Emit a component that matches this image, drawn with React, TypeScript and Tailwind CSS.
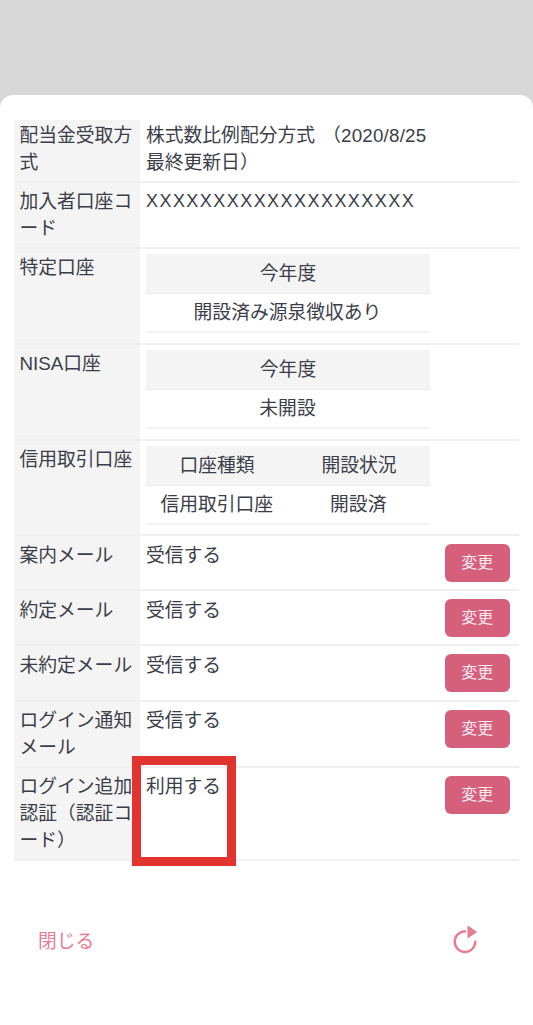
import type { ReactNode } from "react";

type MiniTableProps = { head: string[]; cells: string[] };

function MiniTable({ head, cells }: MiniTableProps) {
  return (
    <div className="mt-[5px] w-[284px] text-center">
      <div className="flex h-10 items-center border-b border-[#ececee] bg-[#f4f4f4]">
        {head.map((text) => (
          <div key={text} className="flex-1">{text}</div>
        ))}
      </div>
      <div className="flex h-[39px] items-center border-b-2 border-[#f3f3f4] pr-px">
        {cells.map((text) => (
          <div key={text} className="flex-1">{text}</div>
        ))}
      </div>
    </div>
  );
}

type RowProps = { label: string; height: string; pad?: string; editable?: boolean; children: ReactNode };

function Row({ label, height, pad = "pt-[5px]", editable, children }: RowProps) {
  return (
    <div className={`flex border-b-2 border-[#f0f0f1] ${height}`}>
      <div className={`w-[126px] shrink-0 whitespace-pre bg-[#f4f4f4] pl-[5.5px] ${pad}`}>{label}</div>
      <div className="w-[304.5px] shrink-0 whitespace-pre pl-[6px]">{children}</div>
      {editable && (
        <button className="mt-2 h-[38px] w-[65.5px] rounded-md bg-[#d65f7b] pb-px text-[16px] text-[#fdeaf0]">変更</button>
      )}
    </div>
  );
}

function Value({ children }: { children: ReactNode }) {
  return <div className="pt-[6px]">{children}</div>;
}

function ReloadIcon() {
  return (
    <svg width="26" height="30" viewBox="0 0 26 30" fill="none">
      <path d="M12 6.4A10.3 10.3 0 1 0 22.3 16.7" stroke="#e77b94" strokeWidth="2.4" strokeLinecap="round" />
      <path d="M15 1.2L23.4 7L15 12.8Z" fill="#e77b94" stroke="#e77b94" strokeLinejoin="round" />
    </svg>
  );
}

export default function App() {
  return (
    <div className="h-[1025px] w-[533px] bg-[#d7d7d7] pt-[95px] font-['Liberation_Sans','Noto_Sans_CJK_JP',sans-serif] text-[18.8px] leading-[27px] text-[#3b3e49]">
      <div className="h-[930px] rounded-t-[13px] bg-white pt-[25px]">
        <div className="ml-[14px] w-[505px]">
          <Row label={"配当金受取方\n式"} height="h-[63px]" pad="pt-[2px]">
            <div className="pt-[2px] [word-spacing:2px]">
              {"株式数比例配分方式 （"}
              <span className="tracking-[0.2px]">2020/8/25</span>
              {"\n最終更新日）"}
            </div>
          </Row>
          <Row label={"加入者口座コ\nード"} height="h-[66px]">
            <div className="pt-[5px] text-[18px] tracking-[1.45px]">XXXXXXXXXXXXXXXXXXXX</div>
          </Row>
          <Row label="特定口座" height="h-[96px]">
            <MiniTable head={["今年度"]} cells={["開設済み源泉徴収あり"]} />
          </Row>
          <Row label="NISA口座" height="h-[96px]">
            <MiniTable head={["今年度"]} cells={["未開設"]} />
          </Row>
          <Row label="信用取引口座" height="h-[95px]">
            <MiniTable head={["口座種類", "開設状況"]} cells={["信用取引口座", "開設済"]} />
          </Row>
          <Row label="案内メール" height="h-[55px]" pad="pt-[6px]" editable>
            <Value>受信する</Value>
          </Row>
          <Row label="約定メール" height="h-[55px]" pad="pt-[6px]" editable>
            <Value>受信する</Value>
          </Row>
          <Row label="未約定メール" height="h-[56px]" pad="pt-[6px]" editable>
            <Value>受信する</Value>
          </Row>
          <Row label={"ログイン通知\nメール"} height="h-[66px]" editable>
            <div className="pt-[5px]">受信する</div>
          </Row>
          <Row label={"ログイン追加\n認証（認証コ\nード）"} height="h-[93px]" editable>
            <div className="relative pt-[5px]">
              利用する
              <div className="absolute -left-[14px] -top-[12px] h-[110px] w-[104px] border-[9px] border-[#e13430]" />
            </div>
          </Row>
        </div>
        <div className="flex items-center justify-between pl-[38px] pr-[54px] pt-[64px] text-[#e77b94]">
          <button className="pt-[2px]">閉じる</button>
          <button aria-label="更新">
            <ReloadIcon />
          </button>
        </div>
      </div>
    </div>
  );
}
